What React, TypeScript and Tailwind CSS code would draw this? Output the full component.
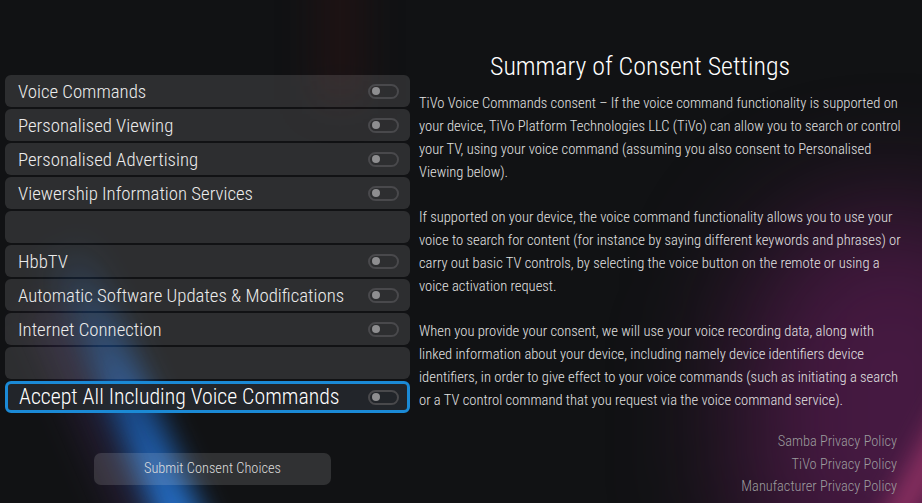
const rows = [
  "Voice Commands",
  "Personalised Viewing",
  "Personalised Advertising",
  "Viewership Information Services",
  "",
  "HbbTV",
  "Automatic Software Updates & Modifications",
  "Internet Connection",
  "",
];

const paragraphs = [
  [
    "TiVo Voice Commands consent – If the voice command functionality is supported on",
    "your device, TiVo Platform Technologies LLC (TiVo) can allow you to search or control",
    "your TV, using your voice command (assuming you also consent to Personalised",
    "Viewing below).",
  ],
  [
    "If supported on your device, the voice command functionality allows you to use your",
    "voice to search for content (for instance by saying different keywords and phrases) or",
    "carry out basic TV controls, by selecting the voice button on the remote or using a",
    "voice activation request.",
  ],
  [
    "When you provide your consent, we will use your voice recording data, along with",
    "linked information about your device, including namely device identifiers device",
    "identifiers, in order to give effect to your voice commands (such as initiating a search",
    "or a TV control command that you request via the voice command service).",
  ],
];

const Toggle = () => (
  <div className="flex h-[15px] w-[31px] items-center rounded-full border-2 border-[#49494c] pl-[2px]">
    <div className="h-[8px] w-[8px] rounded-full bg-[#8e8e90]" />
  </div>
);

const App = () => {
  return (
    <div className="relative h-[503px] w-[922px] overflow-hidden bg-[#111214] font-['Roboto_Condensed',Roboto,sans-serif] font-light text-white">
      {/* background light streaks */}
      <div className="pointer-events-none absolute left-[105px] top-[230px] h-[340px] w-[46px] -rotate-[23deg] bg-gradient-to-b from-transparent via-[#1b5fb8]/70 to-[#2a7ee0] blur-[14px]" />
      <div className="pointer-events-none absolute left-[80px] top-[300px] h-[260px] w-[30px] -rotate-[23deg] bg-[#4a2a6a]/30 blur-[16px]" />
      <div className="pointer-events-none absolute bottom-[-120px] right-[-120px] h-[420px] w-[300px] rounded-full bg-[#7a1f6e]/50 blur-[60px]" />
      <div className="pointer-events-none absolute right-[-10px] top-[380px] h-[200px] w-[28px] rotate-[28deg] bg-[#c0407a]/60 blur-[12px]" />
      <div className="pointer-events-none absolute left-[320px] top-[-40px] h-[140px] w-[40px] bg-[#3a1414]/40 blur-[20px]" />

      <div className="relative flex h-full">
        <div className="flex w-[410px] shrink-0 flex-col pl-[5px] pt-[75px]">
          <div className="flex flex-col gap-[2px]">
            {rows.map((label, i) => (
              <div
                key={i}
                className="flex h-[32px] w-[405px] items-center justify-between rounded-[6px] bg-white/[0.12] pl-[13px] pr-[11px]"
              >
                <span className="whitespace-nowrap pt-[2px] text-[18.8px] text-[#ececec]">{label}</span>
                {label && <Toggle />}
              </div>
            ))}
            <div className="flex h-[32px] w-[405px] items-center justify-between rounded-[6px] border-[3px] border-[#1b8ad6] bg-[#25282c]/90 pl-[11px] pr-[8px]">
              <span className="whitespace-nowrap pt-[1px] text-[21.8px] text-white">Accept All Including Voice Commands</span>
              <Toggle />
            </div>
          </div>
          <div className="mt-[40px] flex justify-center pl-[10px]">
            <div className="flex h-[32px] w-[237px] items-center justify-center rounded-[7px] bg-white/[0.13] text-[14.4px] text-[#dcdcdc]">
              Submit Consent Choices
            </div>
          </div>
        </div>

        <div className="ml-[9px] flex w-[480px] shrink-0 flex-col pt-[49px]">
          <h1 className="pl-[71px] text-[25.9px] leading-[34px] text-white">Summary of Consent Settings</h1>
          <div className="mt-[9px] flex flex-col gap-[22px] text-[14.6px] leading-[23px] text-[#e2e2e2]">
            {paragraphs.map((p, i) => (
              <div key={i}>
                {p.map((line, j) => (
                  <div key={j} className="whitespace-nowrap">
                    {line}
                  </div>
                ))}
              </div>
            ))}
          </div>
          <div className="mt-[19px] flex flex-col items-end pr-[2px] text-[14.4px] leading-[22.5px] text-[#9c9c9e]">
            <span>Samba Privacy Policy</span>
            <span>TiVo Privacy Policy</span>
            <span>Manufacturer Privacy Policy</span>
          </div>
        </div>
      </div>
    </div>
  );
};

export default App;
